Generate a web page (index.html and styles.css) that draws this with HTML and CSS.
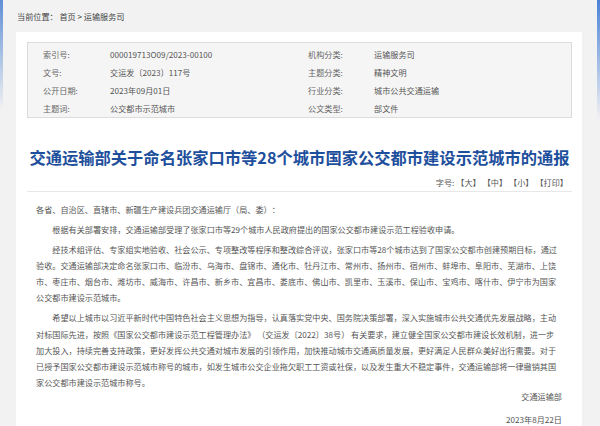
FILE: index.html
```html
<!DOCTYPE html>
<html lang="zh-CN">
<head>
 <meta charset="UTF-8">
 <meta name="viewport" content="width=device-width, initial-scale=1.0">
 <title>交通运输部关于命名张家口市等28个城市国家公交都市建设示范城市的通报</title>
 <link rel="stylesheet" href="styles.css">
</head>
<body>

 <div class="crumb">当前位置：&nbsp;首页 &gt; 运输服务司</div>

 <div class="card">

  <div class="info">
   <span class="lbl">索引号:</span><span class="val">000019713O09/2023-00100</span>
   <span class="lbl">机构分类:</span><span class="val">运输服务司</span>
   <span class="lbl">文号:</span><span class="val">交运发〔2023〕117号</span>
   <span class="lbl">主题分类:</span><span class="val">精神文明</span>
   <span class="lbl">公开日期:</span><span class="val">2023年09月01日</span>
   <span class="lbl">行业分类:</span><span class="val">城市公共交通运输</span>
   <span class="lbl">主题词:</span><span class="val">公交都市示范城市</span>
   <span class="lbl">公文类型:</span><span class="val">部文件</span>
  </div>

  <h1 class="title">交通运输部关于命名张家口市等28个城市国家公交都市建设示范城市的通报</h1>

  <div class="tools">字号:<span class="opt">【大】</span><span class="opt">【中】</span><span class="opt">【小】</span><span class="opt">【打印】</span></div>

  <div class="content">
   <p>各省、自治区、直辖市、新疆生产建设兵团交通运输厅（局、委）：</p>
   <p class="ind">根据有关部署安排，交通运输部受理了张家口市等29个城市人民政府提出的国家公交都市建设示范工程验收申请。</p>
   <p class="ind">经技术组评估、专家组实地验收、社会公示、专项整改等程序和整改综合评议，张家口市等28个城市达到了国家公交都市创建预期目标，通过验收。交通运输部决定命名张家口市、临汾市、乌海市、盘锦市、通化市、牡丹江市、常州市、扬州市、宿州市、蚌埠市、阜阳市、芜湖市、上饶市、枣庄市、烟台市、潍坊市、威海市、许昌市、新乡市、宜昌市、娄底市、佛山市、凯里市、玉溪市、保山市、宝鸡市、喀什市、伊宁市为国家公交都市建设示范城市。</p>
   <p class="ind">希望以上城市以习近平新时代中国特色社会主义思想为指导，认真落实党中央、国务院决策部署，深入实施城市公共交通优先发展战略，主动对标国际先进，按照《国家公交都市建设示范工程管理办法》 （交运发〔2022〕38号） 有关要求，建立健全国家公交都市建设长效机制，进一步加大投入，持续完善支持政策，更好发挥公共交通对城市发展的引领作用，加快推动城市交通高质量发展，更好满足人民群众美好出行需要。对于已授予国家公交都市建设示范城市称号的城市，如发生城市公交企业拖欠职工工资或社保，以及发生重大不稳定事件，交通运输部将一律撤销其国家公交都市建设示范城市称号。</p>
   <p class="sign">交通运输部</p>
   <p class="sign date">2023年8月22日</p>
  </div>

 </div>

</body>
</html>
```

FILE: styles.css
```css
html{
 background:
  linear-gradient(#5f8fd6, rgba(242,242,242,0) 110px) left top / 3px 100% no-repeat,
  linear-gradient(#4a82d8, rgba(242,242,242,0) 120px) right top / 3px 100% no-repeat,
  #f2f2f2;
}

body{
 margin: 0;
 font-family: "Noto Sans CJK SC", "Noto Sans", sans-serif;
 font-size: 8.15px;
 color: #555;
 text-spacing-trim: space-all;
}

.crumb{
 height: 32px;
 line-height: 33px;
 padding-left: 17px;
 color: #444;
}

.card{
 margin: 0 18px 0 16px;
 padding: 10px 10px 0 11px;
 background: #fff;
 min-height: 384px;
}

/* info table */
.info{
 display: grid;
 grid-template-columns: 67px 198px 66px 1fr;
 grid-auto-rows: 18px;
 align-items: center;
 padding: 2px 0 0 15px;
 background: #f5f5f5;
 border: 1px solid #dcdcdc;
}

.info .lbl{
 color: #666;
}

.info .val{
 color: #555;
}

.title{
 margin: 27px 0 0;
 line-height: 24px;
 font-size: 16.3px;
 font-weight: bold;
 color: #1e4f9c;
 text-align: center;
 white-space: nowrap;
}

.tools{
 margin-top: 6px;
 height: 16px;
 line-height: 16px;
 padding-right: 4px;
 text-align: right;
 color: #555;
 border-bottom: 1px solid #e8e8e8;
}

.tools .opt{
 margin-left: 2px;
 cursor: pointer;
}

.content{
 padding: 10px 10px 0 9px;
 line-height: 16.3px;
}

.content p{
 margin: 0 0 3.5px;
}

.content .ind{
 text-indent: 2em;
}

.content .sign{
 margin: -6px 0 0;
 text-align: right;
}

.content .date{
 margin-top: 6px;
}
```
